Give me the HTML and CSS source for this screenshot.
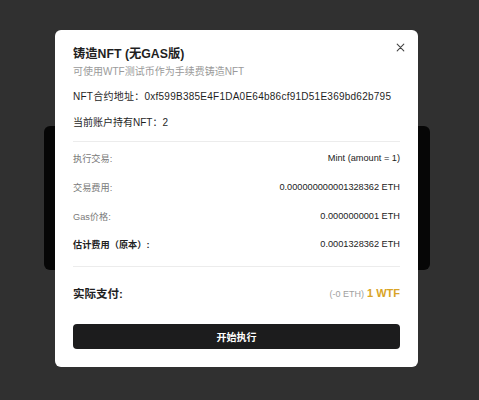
FILE: index.html
```html
<!DOCTYPE html>
<html lang="zh-CN">
<head>
    <meta charset="UTF-8">
    <title>铸造NFT</title>
    <link rel="stylesheet" href="styles.css">
</head>
<body>
    <div class="page">
        <div class="back-card"></div>
    </div>

    <div class="modal">
        <button class="close" aria-label="关闭">
            <svg width="9" height="9" viewBox="0 0 9 9"><path d="M1.2 1.2L7.8 7.8M7.8 1.2L1.2 7.8" stroke="#444" stroke-width="1.1" stroke-linecap="round"/></svg>
        </button>
        <h2 class="title">铸造NFT (无GAS版)</h2>
        <p class="subtitle">可使用WTF测试币作为手续费铸造NFT</p>

        <p class="info address">NFT合约地址：0xf599B385E4F1DA0E64b86cf91D51E369bd62b795</p>
        <p class="info">当前账户持有NFT：2</p>

        <div class="details">
            <div class="row"><span class="label">执行交易:</span><span class="value">Mint (amount = 1)</span></div>
            <div class="row"><span class="label">交易费用:</span><span class="value">0.000000000001328362 ETH</span></div>
            <div class="row"><span class="label">Gas价格:</span><span class="value">0.0000000001 ETH</span></div>
            <div class="row"><span class="label strong">估计费用（原本）:</span><span class="value">0.0001328362 ETH</span></div>
        </div>

        <div class="pay">
            <span class="pay-label">实际支付:</span>
            <span class="pay-value"><small>(-0 ETH)</small> 1 WTF</span>
        </div>

        <button class="submit">开始执行</button>
    </div>
</body>
</html>
```

FILE: styles.css
```css
body {
    margin: 0;
    background-color: #303030;
    font-family: 'Liberation Sans', 'Noto Sans CJK SC', sans-serif;
    color: #1f1f1f;
}

.page {
    height: 400px;
    overflow: hidden;
    padding-top: 126px;
    box-sizing: border-box;
}

.back-card {
    margin-left: 44px;
    width: 386px;
    height: 144px;
    background-color: #060606;
    border-radius: 6px;
}

.modal {
    position: absolute;
    top: 30px;
    left: 55px;
    width: 363px;
    box-sizing: border-box;
    padding: 16px 18px 18px;
    background-color: #fff;
    border-radius: 6px;
}

.close {
    position: absolute;
    top: 13px;
    right: 13px;
    width: 9px;
    height: 9px;
    padding: 0;
    border: none;
    background: none;
    display: flex;
}

.title {
    margin: 0;
    font-size: 12.3px;
    line-height: 16px;
    font-weight: bold;
}

.subtitle {
    margin: 3px 0 0;
    font-size: 10px;
    line-height: 13px;
    color: #9a9a9a;
}

.info {
    margin: 12px 0 0;
    font-size: 10px;
    line-height: 14px;
    white-space: nowrap;
}

.address {
    letter-spacing: 0.25px;
}

.details {
    margin-top: 11px;
    border-top: 1px solid #ececec;
    border-bottom: 1px solid #ececec;
    padding: 2px 0 7px;
}

.row {
    display: flex;
    justify-content: space-between;
    align-items: center;
    height: 28.7px;
    font-size: 9.2px;
}

.label {
    color: #7a7a7a;
}

.label.strong {
    color: #222;
    font-weight: bold;
}

.value {
    color: #222;
}

.pay {
    display: flex;
    justify-content: space-between;
    align-items: center;
    height: 52px;
}

.pay-label {
    font-size: 11.5px;
    font-weight: bold;
}

.pay-value {
    font-size: 11px;
    font-weight: bold;
    color: #d9a426;
}

.pay-value small {
    font-size: 9px;
    font-weight: normal;
    color: #a0a0a0;
}

.submit {
    display: block;
    width: 100%;
    height: 25px;
    margin-top: 5px;
    border: none;
    border-radius: 4px;
    background-color: #1c1c1d;
    color: #fff;
    font-family: inherit;
    font-size: 10px;
    font-weight: bold;
}
```
